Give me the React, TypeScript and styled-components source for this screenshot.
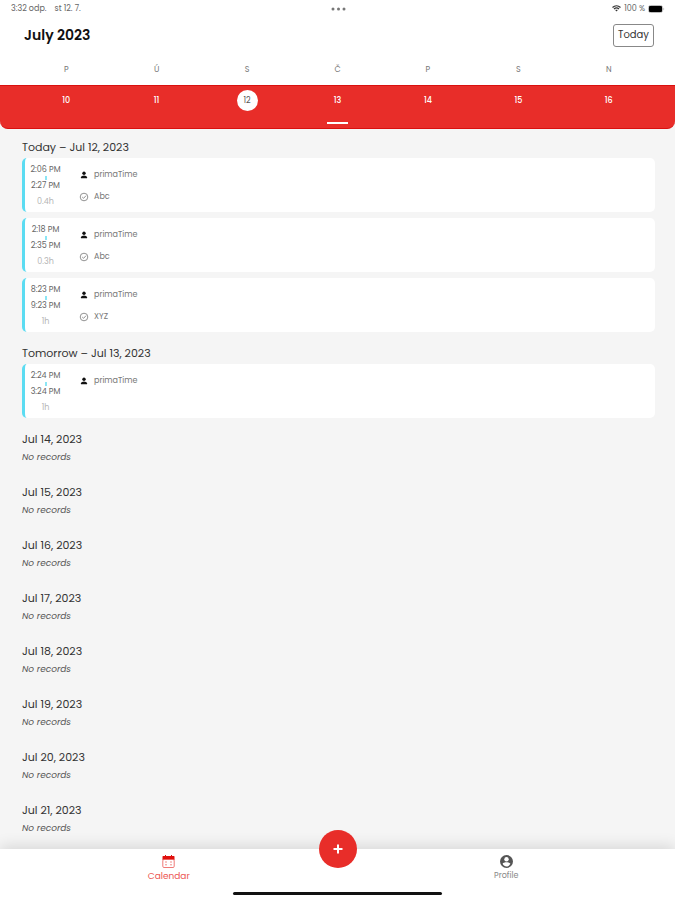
import React from "react";
import styled, { createGlobalStyle } from "styled-components";

const GlobalStyle = createGlobalStyle`
  * { box-sizing: border-box; }
  body {
    margin: 0;
    background: #f5f5f5;
    color: #333;
    font-family: Poppins, Inter, "Open Sans", sans-serif;
  }
  button { font-family: inherit; color: inherit; cursor: pointer; }
  h1, h2, p { margin: 0; }
`;

const red = "#e82d29";

const Screen = styled.div`
  display: flex;
  flex-direction: column;
  height: 100vh;
`;

const Top = styled.header`
  flex: none;
  background: #fff;
`;

const StatusBar = styled.div`
  display: grid;
  grid-template-columns: 1fr auto 1fr;
  align-items: center;
  height: 17px;
  padding: 0 10px 0 11px;
  font-size: 8px;
  line-height: 12px;
  color: #666;
`;

const StatusGroup = styled.div<{ $end?: boolean }>`
  display: flex;
  align-items: center;
  justify-content: ${(p) => (p.$end ? "flex-end" : "flex-start")};
  gap: ${(p) => (p.$end ? 3 : 8)}px;
`;

const TitleRow = styled.div`
  display: flex;
  align-items: center;
  justify-content: space-between;
  height: 36px;
  padding: 0 21px 0 24px;
`;

const Title = styled.h1`
  font-size: 14px;
  line-height: 20px;
  font-weight: 600;
  color: #111;
`;

const TodayButton = styled.button`
  height: 23px;
  padding: 0 4px;
  border: 1px solid #888;
  border-radius: 3px;
  background: #fff;
  font-size: 10px;
  line-height: 20px;
`;

const Week = styled.div`
  display: grid;
  grid-template-columns: repeat(7, 1fr);
  padding: 0 21px;
`;

const WeekNames = styled(Week)`
  height: 32px;
  padding-top: 2px;
  align-items: center;
  text-align: center;
  font-size: 8px;
  line-height: 12px;
  color: #777;
`;

const Band = styled.div`
  background: linear-gradient(#fff 50%, #f5f5f5 50%);
`;

const WeekDays = styled(Week)`
  height: 44px;
  padding-top: 4px;
  border-top: 1px solid #d9100f;
  border-bottom: 1px solid #d9100f;
  border-radius: 0 0 8px 8px;
  background: ${red};
`;

const Day = styled.button<{ $today?: boolean; $marked?: boolean }>`
  display: flex;
  flex-direction: column;
  align-items: center;
  justify-content: space-between;
  height: 34px;
  padding: 0;
  border: 0;
  background: none;
  font-size: 8px;

  span {
    width: 21px;
    height: 21px;
    border-radius: 50%;
    line-height: 22px;
    background: ${(p) => (p.$today ? "#fff" : "transparent")};
    color: ${(p) => (p.$today ? "#555" : "#fff")};
    font-weight: ${(p) => (p.$today ? 400 : 500)};
  }

  &::after {
    content: "";
    width: 21px;
    height: 2px;
    background: ${(p) => (p.$marked ? "#fff" : "transparent")};
  }
`;

const Agenda = styled.main`
  flex: 1;
  min-height: 0;
  overflow-y: auto;
  scrollbar-width: none;
  padding: 7px 20px 24px 22px;
`;

const Section = styled.section<{ $empty?: boolean }>`
  margin-bottom: ${(p) => (p.$empty ? 17 : 10)}px;
`;

const Heading = styled.h2`
  padding-bottom: 2px;
  font-size: 11px;
  line-height: 20px;
  padding-top: 1px;
  padding-bottom: 1px;
  font-weight: 400;
`;

const Empty = styled.p`
  padding-top: 1px;
  font-size: 9px;
  line-height: 13px;
  font-style: italic;
  color: #555;
`;

const Cards = styled.div`
  display: grid;
  gap: 6px;
`;

const Card = styled.article`
  display: flex;
  height: 54px;
  overflow: hidden;
  border-left: 3px solid #5bdcf2;
  border-radius: 5px;
  background: #fff;
`;

const Times = styled.div`
  display: flex;
  flex-direction: column;
  align-items: center;
  width: 41px;
  padding-top: 6px;
  font-size: 8px;
  line-height: 12px;
  color: #666;
`;

const Tick = styled.i`
  width: 2px;
  height: 4px;
  background: #8ce6f5;
`;

const Duration = styled.span`
  margin-top: 4px;
  color: #b5b5b5;
`;

const Details = styled.div`
  display: flex;
  flex-direction: column;
  gap: 10px;
  padding: 11px 0 0 14px;
  font-size: 8px;
  line-height: 12px;
  color: #777;
`;

const Detail = styled.div`
  display: flex;
  align-items: center;
  gap: 6px;
`;

const Bottom = styled.footer`
  position: relative;
  flex: none;
  background: #fff;
  box-shadow: 0 -3px 14px rgba(0, 0, 0, 0.12);
`;

const Tabs = styled.nav`
  display: grid;
  grid-template-columns: 1fr 1fr;
  height: 43px;
`;

const Tab = styled.button<{ $active?: boolean }>`
  display: flex;
  flex-direction: column;
  align-items: center;
  gap: 1px;
  padding: 6px 0 0;
  border: 0;
  background: none;
  color: ${(p) => (p.$active ? "#ec5552" : "#888")};
  font-size: ${(p) => (p.$active ? 9 : 8)}px;
  line-height: 14px;
`;

const AddButton = styled.button`
  position: absolute;
  top: -19px;
  left: 50%;
  display: grid;
  place-items: center;
  width: 38px;
  height: 38px;
  margin-left: -19px;
  padding: 0;
  border: 0;
  border-radius: 50%;
  background: ${red};
`;

const HomeBar = styled.div`
  width: 31%;
  height: 3px;
  margin: 0 auto 5px;
  border-radius: 2px;
  background: #111;
`;

const Dots = () => (
  <svg width="15" height="4" viewBox="0 0 15 4" fill="#777">
    <circle cx="2" cy="2" r="1.5" />
    <circle cx="7.5" cy="2" r="1.5" />
    <circle cx="13" cy="2" r="1.5" />
  </svg>
);

const Wifi = () => (
  <svg width="9" height="7" viewBox="0 0 9 7" fill="none" stroke="#333">
    <path d="M.5 2.4C2.8.4 6.2.4 8.5 2.4M2 4C3.4 2.8 5.6 2.8 7 4" strokeWidth="1.3" />
    <path d="M3.2 5.1C4 4.5 5 4.5 5.8 5.1L4.5 6.6Z" fill="#333" stroke="none" />
  </svg>
);

const Battery = () => (
  <svg width="17" height="8" viewBox="0 0 17 8">
    <rect x=".5" y=".5" width="14" height="7" rx="2" fill="none" stroke="#bbb" />
    <rect x="1" y="1" width="13" height="6" rx="1" fill="#000" />
    <path d="M15.5 2.5Q17 4 15.5 5.5Z" fill="#999" />
  </svg>
);

const Person = () => (
  <svg width="8" height="8" viewBox="0 0 8 8" fill="#111">
    <circle cx="4" cy="2.2" r="1.7" />
    <path d="M1 7.3V6.2C1 5.1 2.8 4.4 4 4.4S7 5.1 7 6.2V7.3Z" />
  </svg>
);

const Check = () => (
  <svg width="8" height="8" viewBox="0 0 8 8" fill="none" stroke="#777" strokeWidth=".8" overflow="visible">
    <circle cx="4" cy="4" r="3.8" />
    <path d="M2.2 4L3.6 5.3L6 2.7" />
  </svg>
);

const CalendarIcon = () => (
  <svg width="13" height="13" viewBox="0 0 13 13">
    <path d="M1 1H3V0H4V1H9V0H10V1H12Q12.5 1 12.5 2V5H.5V2Q.5 1 1 1Z" fill="#e0100d" />
    <rect x=".8" y="4.5" width="11.4" height="8" rx="1.2" fill="none" stroke="#ee6b68" strokeWidth=".9" />
    <path d="M3 7H5M3 9.8H5M8 7H10M8 9.8H10" stroke="#f08c89" />
  </svg>
);

const ProfileIcon = () => (
  <svg width="13" height="13" viewBox="0 0 13 13">
    <circle cx="6.5" cy="6.5" r="6.5" fill="#555" />
    <circle cx="6.5" cy="4.2" r="2.2" fill="#fff" />
    <path d="M2.6 8.8C2.8 7.8 5 7.3 6.5 7.3S10.2 7.8 10.4 8.8C9.5 10.6 8 11.6 6.5 11.6S3.5 10.6 2.6 8.8Z" fill="#fff" />
  </svg>
);

const Plus = () => (
  <svg width="10" height="10" viewBox="0 0 10 10" stroke="#fff" strokeWidth="2">
    <path d="M5 .5V9.5M.5 5H9.5" />
  </svg>
);

type Entry = { start: string; end: string; duration: string; client: string; task?: string };
type DayGroup = { title: string; entries: Entry[] };

const weekNames = ["P", "Ú", "S", "Č", "P", "S", "N"];
const weekDays = [10, 11, 12, 13, 14, 15, 16];

const groups: DayGroup[] = [
  {
    title: "Today – Jul 12, 2023",
    entries: [
      { start: "2:06 PM", end: "2:27 PM", duration: "0.4h", client: "primaTime", task: "Abc" },
      { start: "2:18 PM", end: "2:35 PM", duration: "0.3h", client: "primaTime", task: "Abc" },
      { start: "8:23 PM", end: "9:23 PM", duration: "1h", client: "primaTime", task: "XYZ" },
    ],
  },
  {
    title: "Tomorrow – Jul 13, 2023",
    entries: [{ start: "2:24 PM", end: "3:24 PM", duration: "1h", client: "primaTime" }],
  },
  ...[14, 15, 16, 17, 18, 19, 20, 21].map((d) => ({ title: `Jul ${d}, 2023`, entries: [] })),
];

const EntryCard = ({ entry }: { entry: Entry }) => (
  <Card>
    <Times>
      <span>{entry.start}</span>
      <Tick />
      <span>{entry.end}</span>
      <Duration>{entry.duration}</Duration>
    </Times>
    <Details>
      <Detail><Person />{entry.client}</Detail>
      {entry.task && <Detail><Check />{entry.task}</Detail>}
    </Details>
  </Card>
);

export default function App() {
  return (
    <Screen>
      <GlobalStyle />
      <Top>
        <StatusBar>
          <StatusGroup><span>3:32 odp.</span><span>st 12. 7.</span></StatusGroup>
          <Dots />
          <StatusGroup $end><Wifi /><span>100 %</span><Battery /></StatusGroup>
        </StatusBar>
        <TitleRow>
          <Title>July 2023</Title>
          <TodayButton>Today</TodayButton>
        </TitleRow>
        <WeekNames>
          {weekNames.map((name, i) => <span key={i}>{name}</span>)}
        </WeekNames>
        <Band>
          <WeekDays>
            {weekDays.map((day) => (
              <Day key={day} $today={day === 12} $marked={day === 13}><span>{day}</span></Day>
            ))}
          </WeekDays>
        </Band>
      </Top>
      <Agenda>
        {groups.map((group) => (
          <Section key={group.title} $empty={group.entries.length === 0}>
            <Heading>{group.title}</Heading>
            {group.entries.length === 0 ? (
              <Empty>No records</Empty>
            ) : (
              <Cards>
                {group.entries.map((entry) => <EntryCard key={entry.start} entry={entry} />)}
              </Cards>
            )}
          </Section>
        ))}
      </Agenda>
      <Bottom>
        <Tabs>
          <Tab $active><CalendarIcon />Calendar</Tab>
          <Tab><ProfileIcon />Profile</Tab>
        </Tabs>
        <AddButton aria-label="Add record"><Plus /></AddButton>
        <HomeBar />
      </Bottom>
    </Screen>
  );
}
